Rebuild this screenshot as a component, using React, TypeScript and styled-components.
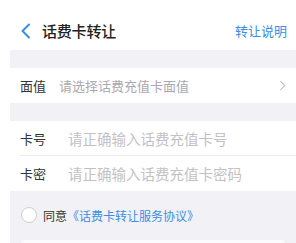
import React from "react";
import styled, { createGlobalStyle } from "styled-components";

const GlobalStyle = createGlobalStyle`
  html, body {
    margin: 0;
    padding: 0;
    background: #ffffff;
  }
  body {
    font-family: "Noto Sans CJK SC", "Noto Sans", sans-serif;
    -webkit-font-smoothing: antialiased;
  }
`;

const Chevron = ({ color, size }: { color: string; size: number }) => (
  <svg width={size} height={size} viewBox="0 0 12 12" fill="none">
    <path d="M4 1.5 L8.5 6 L4 10.5" stroke={color} strokeWidth="1.2" strokeLinecap="round" strokeLinejoin="round" />
  </svg>
);

const BackIcon = () => (
  <svg width="12" height="16" viewBox="0 0 12 16" fill="none">
    <path d="M9 1.5 L2.5 8 L9 14.5" stroke="#3a8ee6" strokeWidth="2" strokeLinecap="round" strokeLinejoin="round" />
  </svg>
);

const App = () => {
  return (
    <>
      <GlobalStyle />
      <Page>
        <NavBar>
          <NavLeft>
            <BackButton>
              <BackIcon />
            </BackButton>
            <Title>话费卡转让</Title>
          </NavLeft>
          <NavLink>转让说明</NavLink>
        </NavBar>
        <Gap />
        <Row>
          <Label width={39}>面值</Label>
          <Placeholder size={13} color="#a9a9ae">请选择话费充值卡面值</Placeholder>
          <Chevron color="#c4c4c8" size={11} />
        </Row>
        <Gap />
        <Group>
          <Row divided>
            <Label width={48}>卡号</Label>
            <Placeholder size={14.5} color="#c2c2c6">请正确输入话费充值卡号</Placeholder>
          </Row>
          <Row>
            <Label width={48}>卡密</Label>
            <Placeholder size={14.5} color="#c2c2c6">请正确输入话费充值卡密码</Placeholder>
          </Row>
        </Group>
        <Footer>
          <Agreement>
            <Radio />
            <AgreeText>同意</AgreeText>
            <AgreeLink>《话费卡转让服务协议》</AgreeLink>
          </Agreement>
          <SubmitButton />
        </Footer>
      </Page>
    </>
  );
};

const Page = styled.div`
  width: 296px;
  height: 243px;
  overflow: hidden;
  padding-left: 10px;
  box-sizing: border-box;
  background: #ffffff;
`;

const NavBar = styled.header`
  height: 50px;
  display: flex;
  align-items: center;
  justify-content: space-between;
  padding: 11px 9px 0 10px;
  box-sizing: border-box;
`;

const NavLeft = styled.div`
  display: flex;
  align-items: center;
`;

const BackButton = styled.div`
  display: flex;
  align-items: center;
  width: 22px;
`;

const Title = styled.h1`
  margin: 0;
  font-size: 15px;
  font-weight: 500;
  color: #222222;
  letter-spacing: -0.2px;
`;

const NavLink = styled.span`
  font-size: 13px;
  color: #3a8ee6;
`;

const Gap = styled.div`
  height: 18px;
  background: #f2f2f6;
`;

const Group = styled.div`
  background: #ffffff;
`;

const Row = styled.div<{ divided?: boolean }>`
  height: 35px;
  display: flex;
  align-items: center;
  padding: 0 8px 0 10px;
  background: #ffffff;
  position: relative;
  ${({ divided }) =>
    divided &&
    `
    &::after {
      content: "";
      position: absolute;
      left: 10px;
      right: 0;
      bottom: 0;
      height: 1px;
      background: #ececef;
    }
  `}
`;

const Label = styled.span<{ width: number }>`
  width: ${({ width }) => width}px;
  flex-shrink: 0;
  font-size: 13px;
  color: #333333;
`;

const Placeholder = styled.span<{ size: number; color: string }>`
  flex: 1;
  font-size: ${({ size }) => size}px;
  color: ${({ color }) => color};
`;

const Footer = styled.div`
  background: #f2f2f6;
  height: 70px;
  padding: 15px 11px 0 11px;
  box-sizing: border-box;
`;

const Agreement = styled.div`
  display: flex;
  align-items: center;
  height: 18px;
`;

const Radio = styled.span`
  width: 16px;
  height: 16px;
  border-radius: 50%;
  border: 1px solid #cfcfd3;
  background: #ffffff;
  box-sizing: border-box;
  margin-right: 6px;
`;

const AgreeText = styled.span`
  font-size: 12px;
  color: #333333;
`;

const AgreeLink = styled.span`
  font-size: 12px;
  color: #3a8ee6;
`;

const SubmitButton = styled.div`
  margin-top: 16px;
  height: 30px;
  background: #fbfbfd;
  border-radius: 4px;
`;

export default App;
